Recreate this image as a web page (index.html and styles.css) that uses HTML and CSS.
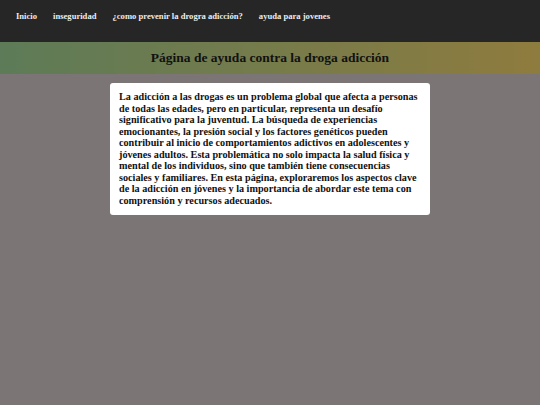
FILE: index.html
```html
<!DOCTYPE html>
<html lang="es">
<head>
<meta charset="utf-8">
<title>Página de ayuda contra la droga adicción</title>
<link rel="stylesheet" href="styles.css">
</head>
<body>
<nav class="nav">
  <a class="nav-link" href="#">Inicio</a>
  <a class="nav-link" href="#">inseguridad</a>
  <a class="nav-link" href="#">¿como prevenir la drogra adicción?</a>
  <a class="nav-link" href="#">ayuda para jovenes</a>
</nav>
<header class="hero">
  <h1 class="title">Página de ayuda contra la droga adicción</h1>
</header>
<main class="main">
  <section class="card">
    <p class="card-text">La adicción a las drogas es un problema global que afecta a personas de todas las edades, pero en particular, representa un desafío significativo para la juventud. La búsqueda de experiencias emocionantes, la presión social y los factores genéticos pueden contribuir al inicio de comportamientos adictivos en adolescentes y jóvenes adultos. Esta problemática no solo impacta la salud física y mental de los individuos, sino que también tiene consecuencias sociales y familiares. En esta página, exploraremos los aspectos clave de la adicción en jóvenes y la importancia de abordar este tema con comprensión y recursos adecuados.</p>
  </section>
</main>
</body>
</html>
```
FILE: styles.css
```css
html, body {
  margin: 0;
  padding: 0;
}
body {
  background: #7b7575;
  font-family: "Liberation Serif", "Times New Roman", serif;
  min-height: 405px;
}
.nav {
  height: 42px;
  background: #262626;
  display: flex;
  align-items: center;
  padding-left: 16px;
  gap: 16px;
  box-sizing: border-box;
  padding-bottom: 10px;
}
.nav-link {
  color: #ececec;
  font-weight: bold;
  font-size: 8.6px;
  text-decoration: none;
}
.hero {
  height: 32px;
  background: linear-gradient(to right, #5d7b58, #8f7b3e);
  display: flex;
  align-items: center;
  justify-content: center;
}
.title {
  margin: 0;
  font-size: 13.5px;
  font-weight: bold;
  color: #111;
}
.main {
  padding-top: 9px;
  display: flex;
  justify-content: center;
}
.card {
  width: 320px;
  box-sizing: border-box;
  background: #fff;
  border-radius: 3px;
  padding: 8px 9px 9px 9px;
}
.card-text {
  margin: 0;
  font-size: 10.2px;
  font-weight: bold;
  line-height: 11.5px;
  color: #111;
}
```
